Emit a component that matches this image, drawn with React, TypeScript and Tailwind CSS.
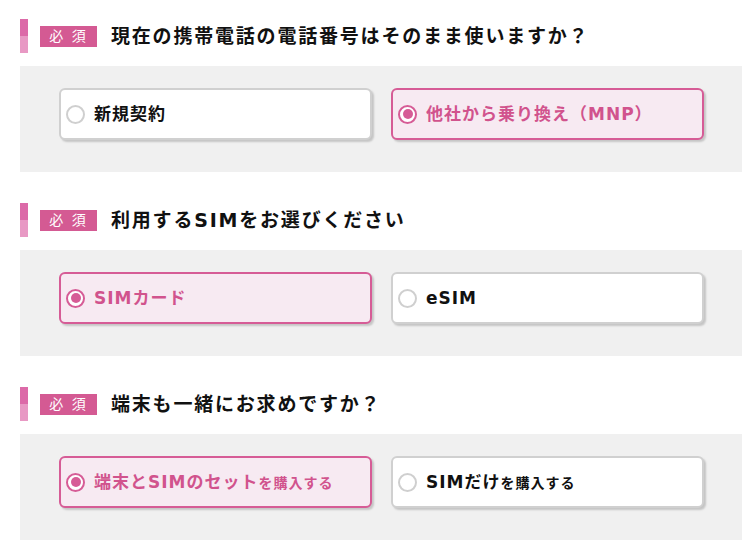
const font = { fontFamily: '"DejaVu Sans", "Noto Sans CJK JP", sans-serif' };

type Option = { label: string; sub?: string; selected: boolean };

const questions: { title: string; options: Option[] }[] = [
  {
    title: "現在の携帯電話の電話番号はそのまま使いますか？",
    options: [
      { label: "新規契約", selected: false },
      { label: "他社から乗り換え（MNP）", selected: true },
    ],
  },
  {
    title: "利用するSIMをお選びください",
    options: [
      { label: "SIMカード", selected: true },
      { label: "eSIM", selected: false },
    ],
  },
  {
    title: "端末も一緒にお求めですか？",
    options: [
      { label: "端末とSIMのセット", sub: "を購入する", selected: true },
      { label: "SIMだけ", sub: "を購入する", selected: false },
    ],
  },
];

const Radio = ({ on }: { on: boolean }) =>
  on ? (
    <div className="w-[19px] h-[19px] rounded-full border-[2.5px] border-[#d65c96] bg-white flex items-center justify-center shrink-0">
      <div className="w-[10px] h-[10px] rounded-full bg-[#d65c96]" />
    </div>
  ) : (
    <div className="w-[19px] h-[19px] rounded-full border-2 border-[#cfcfcf] bg-white shrink-0" />
  );

const Card = ({ opt }: { opt: Option }) => (
  <div
    className={
      "w-[313px] h-[52px] rounded-[6px] border-2 flex items-center pl-[5px] shadow-[2px_2px_2px_rgba(0,0,0,0.18)] " +
      (opt.selected ? "border-[#d65c96] bg-[#f7eaf2] text-[#d1538d]" : "border-[#d0d0d0] bg-white text-[#111]")
    }
  >
    <Radio on={opt.selected} />
    <span className="ml-[9px] text-[17px] font-bold tracking-[1px] leading-none">
      {opt.label}
      {opt.sub && <span className="text-[14px] tracking-[1px]">{opt.sub}</span>}
    </span>
  </div>
);

export default function App() {
  return (
    <div className="w-[752px] h-[549px] bg-white pt-[19px] pl-[20px] pr-[10px]" style={font}>
      {questions.map((q, i) => (
        <div key={i} className={i === 0 ? "" : "mt-[31px]"}>
          <div className="flex items-center h-[34px]">
            <div className="w-[8px] h-[34px] flex flex-col">
              <div className="flex-1 bg-[#dc6aa8]" />
              <div className="flex-1 bg-[#e899c4]" />
            </div>
            <div className="ml-[12px] w-[57px] h-[21px] bg-[#d45a93] text-white text-[14px] tracking-[2px] flex items-center justify-center leading-none">
              必 須
            </div>
            <div className="ml-[14px] text-[19px] font-bold tracking-[1.8px] text-[#111] leading-none">{q.title}</div>
          </div>
          <div className="mt-[13px] h-[106px] bg-[#f0f0f0] pt-[22px] pl-[39px] flex gap-[19px]">
            {q.options.map((o, j) => (
              <Card key={j} opt={o} />
            ))}
          </div>
        </div>
      ))}
    </div>
  );
}
